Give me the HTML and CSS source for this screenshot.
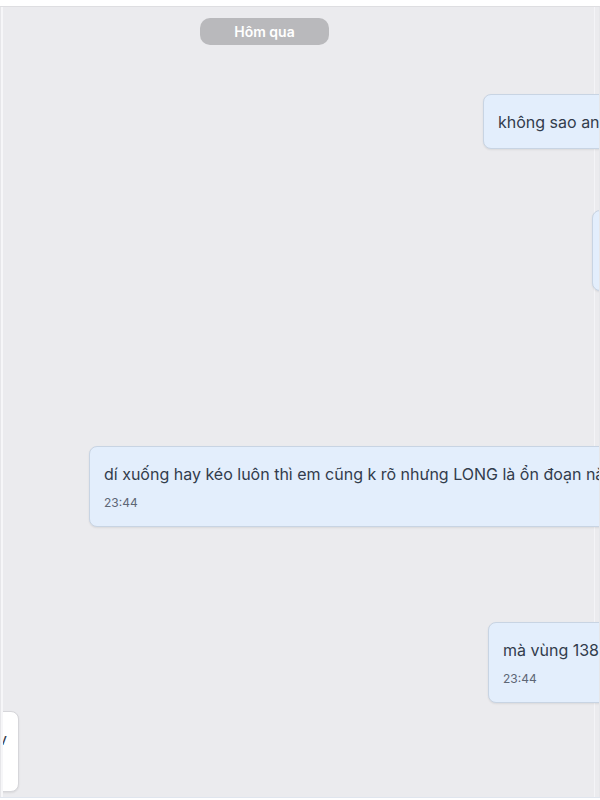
FILE: index.html
```html
<!DOCTYPE html>
<html lang="vi">
<head>
<meta charset="utf-8">
<title>Chat</title>
<link rel="stylesheet" href="styles.css">
</head>
<body>
<div class="app">
  <div class="chat">
    <div class="date-row"><span class="date-pill">Hôm qua</span></div>

    <div class="row out m1">
      <div class="bubble me single"><div class="text">không sao anh ạ em cũng mới xem thôi</div></div>
    </div>

    <div class="row out m2">
      <div class="bubble me"><div class="text">ok anh</div><div class="time">23:43</div></div>
    </div>

    <div class="row out m3">
      <div class="bubble me"><div class="text">dí xuống hay kéo luôn thì em cũng k rõ nhưng LONG là ổn đoạn này rồi anh</div><div class="time">23:44</div></div>
    </div>

    <div class="row out m4">
      <div class="bubble me"><div class="text">mà vùng 1382 đang giữ khá tốt</div><div class="time">23:44</div></div>
    </div>

    <div class="row in m5">
      <div class="bubble other"><div class="text">ok em hiểu rồi v</div><div class="time">23:45</div></div>
    </div>
  </div>
</div>
</body>
</html>
```

FILE: styles.css
```css
html, body {
  margin: 0;
  padding: 0;
  background: #ffffff;
  font-family: Inter, "Noto Sans", Roboto, sans-serif;
}

.app {
  margin-top: 6px;
  border-top: 1px solid #dedee1;
  height: 790px;
  padding-left: 1px;
  padding-right: 1px;
  background: #e6e6e9;
  border-bottom: 1px solid #dfe5ee;
}

.chat {
  height: 790px;
  background: #ebebee;
  border-left: 2px solid #f6f6f8;
  box-shadow: inset -4px 0 0 #ebebee, inset -5px 0 0 #f4f4f7, inset -1px 0 0 #f9f9fb;
  overflow: hidden;
  display: flex;
  flex-direction: column;
}

.date-row {
  display: flex;
  padding-left: 197px;
  padding-top: 11px;
}

.date-pill {
  width: 129px;
  height: 27px;
  border-radius: 10px;
  background: #b9b9bc;
  color: #ffffff;
  font-size: 14px;
  font-weight: 600;
  line-height: 27px;
  text-align: center;
}

.row {
  display: flex;
  flex: none;
}

.row.out .bubble {
  width: 900px;
}

.m1 { margin-top: 49px; padding-left: 480px; }
.m2 { margin-top: 61px; padding-left: 589px; }
.m3 { margin-top: 155px; padding-left: 86px; }
.m4 { margin-top: 95px; padding-left: 485px; }
.m5 { margin-top: 8px; width: 16px; justify-content: flex-end; }

.bubble {
  flex: none;
  box-sizing: border-box;
  border-radius: 8px;
  padding: 16px 14px 15px 14px;
  white-space: nowrap;
  box-shadow: 0 1px 2px rgba(0, 0, 0, 0.08);
}

.bubble.single {
  padding-top: 16px;
  padding-bottom: 15px;
}

.bubble.me {
  background: #e3eefc;
  border: 1px solid #c8d4e3;
}

.bubble.other {
  background: #ffffff;
  border: 1px solid #d6d6da;
  padding-right: 11px;
}

.text {
  font-size: 16px;
  line-height: 22px;
  color: #323c4c;
}

.time {
  margin-top: 10px;
  font-size: 12px;
  line-height: 16px;
  color: #5d6675;
}
```
